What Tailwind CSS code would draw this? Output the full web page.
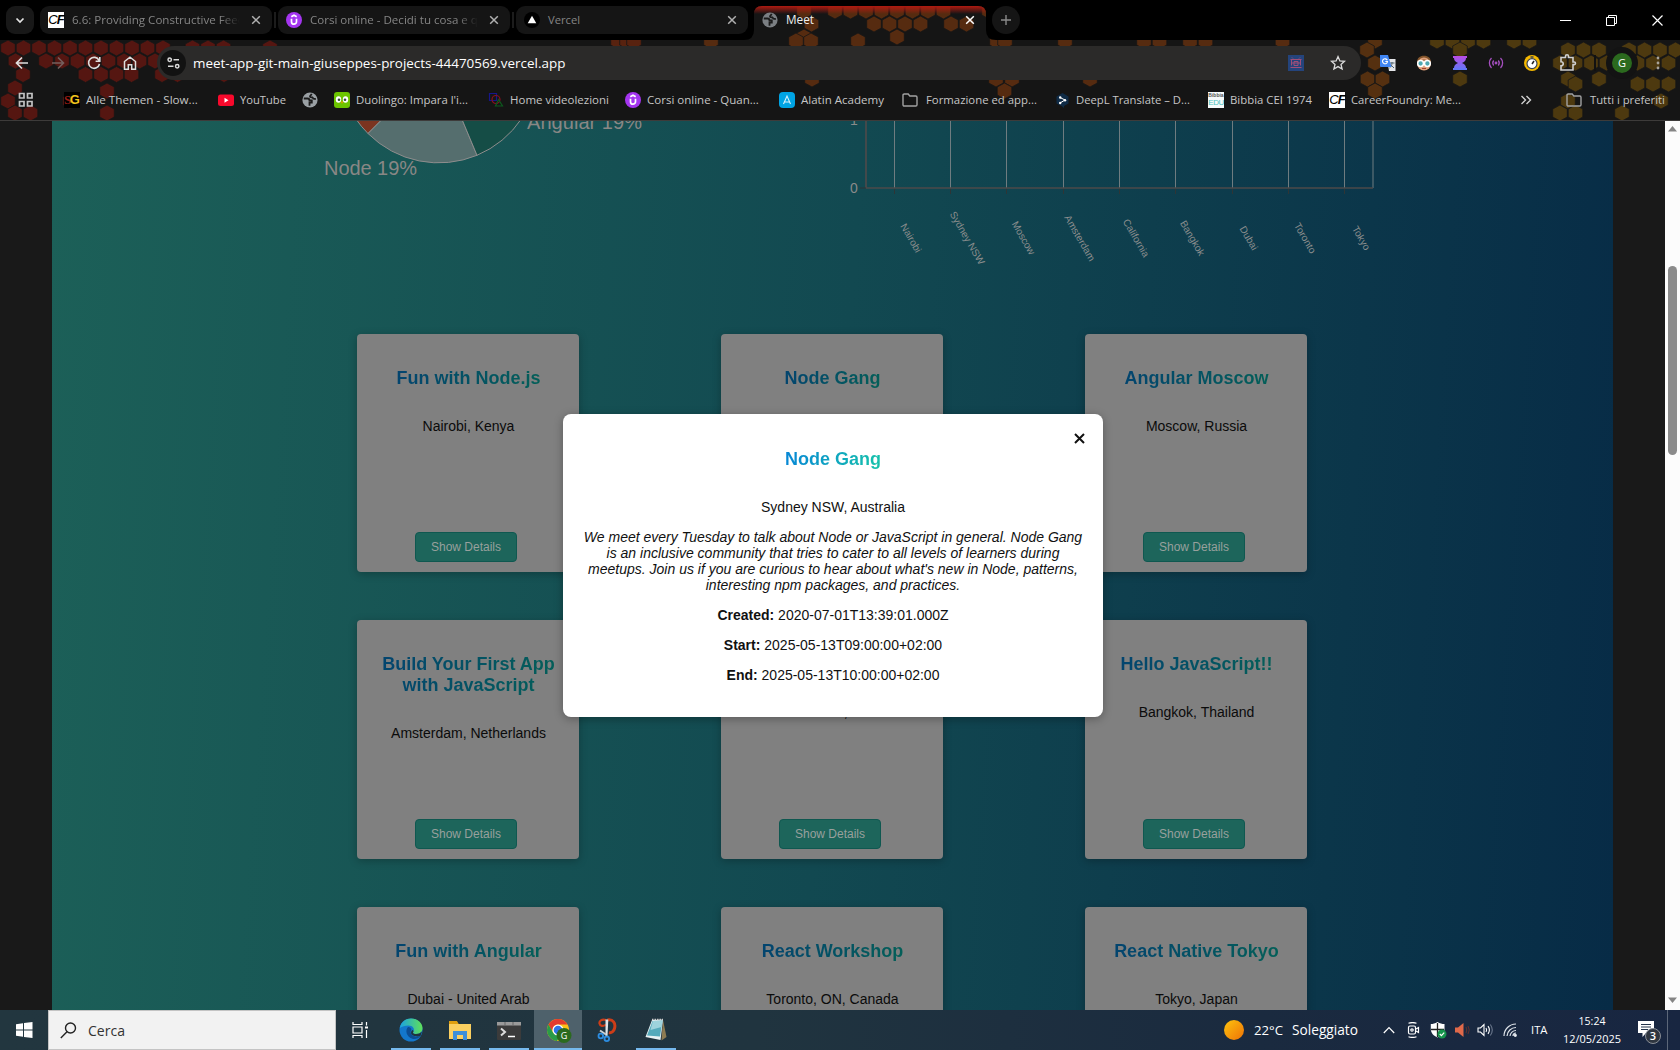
<!DOCTYPE html>
<html lang="it">
<head>
<meta charset="utf-8">
<title>Meet</title>
<script src="https://cdn.jsdelivr.net/npm/@tailwindcss/browser@4"></script>
</head>
<body class="w-[1680px] h-[1050px] overflow-hidden bg-black">
<svg width="0" height="0" class="absolute">
  <defs>
    <symbol id="x" viewBox="0 0 10 10"><path d="M1.2 1.2l7.6 7.6M8.8 1.2L1.2 8.8" fill="none" stroke="currentColor" stroke-width="1.5"/></symbol>
    <symbol id="globe" viewBox="0 0 16 16"><circle cx="8" cy="8" r="7.6" fill="currentColor"/><path d="M1.800 6.500h3.700c1.500 0 2 .8 2 2h2.300v2.200H7.500v3" stroke="#1b1b1b" stroke-width="1.800" fill="none"/><path d="M9.500 1.800c0 1.700-1.500 1.500-1.500 2.700 0 1 1.300.8 2.300.8.7 1.500 2 1.700 3.500 1.700" stroke="#1b1b1b" stroke-width="1.800" fill="none"/></symbol>
    <symbol id="folder" viewBox="0 0 16 14"><path d="M1 2.200C1 1.500 1.500 1 2.200 1h4l1.600 2h6c.700 0 1.200.500 1.200 1.200v7.600c0 .700-.500 1.200-1.200 1.200H2.200C1.500 13 1 12.500 1 11.800z" fill="none" stroke="#a2a2a2" stroke-width="1.400"/></symbol>
    <symbol id="udemy" viewBox="0 0 16 16"><circle cx="8" cy="8" r="8" fill="#a435f0"/><path d="M5.300 4.800L8 3.200l2.700 1.600M5.500 6.700v3a2.500 2.500 0 005 0v-3" fill="none" stroke="#fff" stroke-width="1.700"/></symbol>
  </defs>
</svg>

<div class="flex flex-col w-[1680px] h-[1050px] relative font-['Open_Sans','Noto_Sans',sans-serif]">

<!-- browser chrome -->
<header class="relative h-[121px] shrink-0 bg-[#151515] border-b border-[#3d3b3a]">
  <svg id="hexes" width="1680" height="120" class="absolute left-0 top-0"></svg>

  <!-- tab strip -->
  <div class="relative h-10 flex items-start pt-[6px] pl-[6px]">
    <svg width="1680" height="40" class="absolute left-0 top-0">
      <defs><linearGradient id="tabglow" x1="0" y1="0" x2="0" y2="1"><stop offset="0" stop-color="#b01a10"/><stop offset="1" stop-color="#b01a10" stop-opacity="0"/></linearGradient></defs>
      <path fill="#000" fill-rule="evenodd" d="M0 0H1680V40H996q-10 0-10-10V14q0-8-8-8H762q-8 0-8 8V30q0 10-10 10H0z"/>
      <path d="M754 14q0-8 8-8H978q8 0 8 8z" fill="url(#tabglow)"/>
    </svg>
    <div class="relative w-[28px] h-[28px] rounded-[9px] bg-[#181818] flex items-center justify-center"><svg width="10" height="7" viewBox="0 0 10 7"><path d="M1.500 1.500L5 5l3.500-3.500" fill="none" stroke="#e6e6e6" stroke-width="1.700"/></svg></div>
    <div class="relative ml-[6px] w-[232px] h-[28px] rounded-[9px] bg-[#151515] flex items-center pl-2 text-xs text-[#858585]">
      <div class="w-4 h-4 bg-white text-black text-[13px] leading-4 font-bold italic text-center font-['Liberation_Sans',sans-serif] tracking-[-1px]"><span class="font-normal">C</span>F</div>
      <div class="ml-2 w-[168px] overflow-hidden whitespace-nowrap [mask-image:linear-gradient(90deg,#000_88%,transparent)]"><span data-w="173">6.6: Providing Constructive Feed</span></div>
      <svg class="ml-[11px] text-[#b0b0b0]" width="10" height="10"><use href="#x"/></svg>
    </div>
    <div class="relative ml-[2px] mt-[6px] w-[2px] h-4 bg-[#1c1c1c]"></div>
    <div class="relative ml-[2px] w-[232px] h-[28px] rounded-[9px] bg-[#151515] flex items-center pl-2 text-xs text-[#858585]">
      <svg width="16" height="16"><use href="#udemy"/></svg>
      <div class="ml-2 w-[168px] overflow-hidden whitespace-nowrap [mask-image:linear-gradient(90deg,#000_88%,transparent)]"><span data-w="168">Corsi online - Decidi tu cosa e q</span></div>
      <svg class="ml-[11px] text-[#b0b0b0]" width="10" height="10"><use href="#x"/></svg>
    </div>
    <div class="relative ml-[2px] mt-[6px] w-[2px] h-4 bg-[#1c1c1c]"></div>
    <div class="relative ml-[2px] w-[232px] h-[28px] rounded-[9px] bg-[#151515] flex items-center pl-2 text-xs text-[#858585]">
      <svg width="16" height="16"><circle cx="8" cy="8" r="8" fill="#000"/><path d="M8 3.700l4.300 7.600H3.700z" fill="#fff"/></svg>
      <div class="ml-2 w-[168px] whitespace-nowrap"><span data-w="32">Vercel</span></div>
      <svg class="ml-[11px] text-[#b0b0b0]" width="10" height="10"><use href="#x"/></svg>
    </div>
    <div class="relative ml-[6px] w-[232px] h-[28px] flex items-center pl-2 text-xs text-[#eee]">
      <svg class="text-[#7b7f83]" width="16" height="16"><use href="#globe"/></svg>
      <div class="ml-2 w-[168px] whitespace-nowrap"><span data-w="28">Meet</span></div>
      <svg class="ml-[11px] text-white" width="10" height="10"><use href="#x"/></svg>
    </div>
    <div class="relative ml-[6px] w-[28px] h-[28px] rounded-full bg-[#151515] flex items-center justify-center"><svg width="12" height="12"><path d="M6 1v10M1 6h10" stroke="#8a8a8a" stroke-width="1.400"/></svg></div>
    <div class="relative ml-auto mr-[17px] h-[28px] flex items-center gap-[35px]">
      <svg width="11" height="11"><path d="M0 5.500h11" stroke="#fff"/></svg>
      <svg width="11" height="11"><path d="M.5 2.500h8v8h-8zM2.500 2.500v-2h8v8h-2" fill="none" stroke="#fff"/></svg>
      <svg width="11" height="11"><path d="M.5.5l10 10M10.500.5l-10 10" stroke="#fff" stroke-width="1.200"/></svg>
    </div>
  </div>

  <!-- toolbar -->
  <div class="relative h-[46px] flex items-center pl-1">
    <div class="w-9 flex justify-center"><svg width="14" height="14"><path d="M13 7H2M7 1.500L1.500 7 7 12.500" fill="none" stroke="#dedede" stroke-width="1.700"/></svg></div>
    <div class="w-9 flex justify-center"><svg width="14" height="14"><path d="M1 7h11M7 1.500L12.500 7 7 12.500" fill="none" stroke="#75605e" stroke-width="1.600"/></svg></div>
    <div class="w-9 flex justify-center"><svg width="14" height="14"><path d="M12 4.300A5.500 5.500 0 1012.500 8M12.800 1v4.200H8.600" fill="none" stroke="#dedede" stroke-width="1.600"/></svg></div>
    <div class="w-9 flex justify-center"><svg width="14" height="14"><path d="M1.500 5.500L7 1.200l5.500 4.300v7.700H8.700V8.800H5.300v4.400H1.500z" fill="none" stroke="#dedede" stroke-width="1.500"/></svg></div>
    <div class="ml-[9px] w-[1204px] h-[34px] rounded-full bg-[#2b2a29] flex items-center pl-[3px]">
      <div class="w-[26px] h-[26px] rounded-full bg-[#121212] flex items-center justify-center"><svg width="13" height="12" fill="none" stroke="#dadada" stroke-width="1.500"><circle cx="2.700" cy="2.800" r="1.700"/><path d="M6.500 2.800H12M1 9.200h5.500"/><circle cx="10.200" cy="9.200" r="1.700"/></svg></div>
      <div class="ml-[7px] text-sm text-white whitespace-nowrap"><span data-w="373">meet-app-git-main-giuseppes-projects-44470569.vercel.app</span></div>
      <svg class="ml-auto" width="16" height="16"><path fill="#24447c" d="M0 0h16v16H0z"/><path d="M2.500 4.500h11M3.500 4.500v6M12.500 4.500v6M2.500 12.500h11M3.500 8h9M6 6.500h4v4H6zM4 2.500l1 1M12 2.500l-1 1" stroke="#a04f78" fill="none"/></svg>
      <svg class="ml-[26px] mr-[15px]" width="16" height="16"><path d="M8 1.600l1.900 4.300 4.600.4-3.500 3.100 1.100 4.600L8 11.600 3.900 14 5 9.400 1.500 6.300l4.600-.4z" fill="none" stroke="#dcdcdc" stroke-width="1.300"/></svg>
    </div>
    <div class="ml-[9px] w-9 flex justify-center"><svg width="16" height="16"><path d="M7 4h8.500v12H9z" fill="#e4e6ea"/><path d="M9.500 8h5M12 7v1c0 2-1 4-2.500 5M10.500 9.500l3.500 3.500" stroke="#53656d" fill="none"/><path d="M0 0h8l3.500 12H1a1 1 0 01-1-1z" fill="#4086f4"/><path d="M7.300 5.300A2.500 2.500 0 107.500 6.500H5.300" stroke="#fff" fill="none" stroke-width="1.100"/></svg></div>
    <div class="w-9 flex justify-center"><svg width="16" height="16"><circle cx="8" cy="8.500" r="7" fill="#dfa07a"/><path d="M1 7C1.500 2 5 .8 8 .8S14.500 2 15 7c-3-2-11-2-14 0z" fill="#80542b"/><path d="M4 5q4-3 8 0" stroke="#dfa07a" stroke-width="2" fill="none"/><circle cx="4.600" cy="8.500" r="2.900" fill="#4fa8b2" stroke="#fff" stroke-width="1.500"/><circle cx="11.400" cy="8.500" r="2.900" fill="#4fa8b2" stroke="#fff" stroke-width="1.500"/><path d="M6 13.500h4" stroke="#a04030"/></svg></div>
    <div class="w-9 flex justify-center"><svg width="16" height="16"><defs><linearGradient id="hg" x1="0" y1="0" x2="0" y2="1"><stop offset="0" stop-color="#bb4ce4"/><stop offset="1" stop-color="#5f79f7"/></linearGradient></defs><path d="M1 1h14v2h-1c0 3-2 4-4 5 2 1 4 2 4 5h1v2H1v-2h1c0-3 2-4 4-5-2-1-4-2-4-5H1z" fill="url(#hg)"/></svg></div>
    <div class="w-9 flex justify-center"><svg width="16" height="14" fill="none" stroke="#a64fc0" stroke-width="1.300"><path d="M3.500 2a7 7 0 000 10M12.500 2a7 7 0 010 10M5.700 4.500a4 4 0 000 5M10.300 4.500a4 4 0 010 5"/><circle cx="8" cy="7" r=".8" fill="#a64fc0"/></svg></div>
    <div class="w-9 flex justify-center"><svg width="16" height="16"><circle cx="8" cy="8" r="8" fill="#f5b800"/><circle cx="8" cy="8.600" r="5" fill="#fff" stroke="#3b4350" stroke-width="1.200"/><path d="M8 9l2-3" stroke="#222" stroke-width="1.500"/><path d="M6.500 2h3" stroke="#3b4350" stroke-width="1.500"/></svg></div>
    <div class="w-9 flex justify-center"><svg width="18" height="18"><path d="M2 3.500h4.500V2.300a1.500 1.500 0 013 0v1.200H14v4.500h1.200a1.300 1.300 0 010 2.600H14V16H2v-4.300c3 0 3-4 0-4z" fill="none" stroke="#cfcfcf" stroke-width="1.600"/></svg></div>
    <div class="w-[18px] flex justify-center"><div class="w-[2px] h-4 bg-[#111]"></div></div>
    <div class="w-9 flex justify-center"><div class="w-[32px] h-[32px] rounded-full bg-[#131313] flex items-center justify-center"><div class="w-5 h-5 rounded-full bg-[#2b6a1e] text-white text-[11px] leading-5 text-center">G</div></div></div>
    <div class="w-9 flex justify-center"><svg width="4" height="16" fill="#a8a39a"><circle cx="2" cy="3" r="1.400"/><circle cx="2" cy="8" r="1.400"/><circle cx="2" cy="13" r="1.400"/></svg></div>
  </div>

  <!-- bookmarks -->
  <div class="relative h-[28px] flex items-center pl-[18px] text-xs text-[#c6c6c6] whitespace-nowrap">
    <div class="w-[46px] shrink-0"><svg width="16" height="16" fill="none" stroke="#c4c4c4" stroke-width="1.700"><path d="M1.500 1.500h4.500v4.500H1.500zM9.500 1.500H14v4.500H9.500zM1.500 9.500h4.500V14H1.500zM9.500 9.500H14V14H9.500z"/></svg></div>
    <div class="w-[154px] shrink-0 flex items-center gap-[6px]"><div class="w-4 h-4 bg-black text-[13px] leading-4 font-bold font-['Liberation_Serif',serif] tracking-[-1.500px]"><span class="text-[#9b1c14]">S</span><span class="text-[#f0c51c] font-['Liberation_Sans',sans-serif]">G</span></div><span data-w="112">Alle Themen - Slow...</span></div>
    <div class="w-[84px] shrink-0 flex items-center gap-[6px]"><svg width="16" height="16"><rect y="2.500" width="16" height="11.500" rx="2.500" fill="#f8092c"/><path d="M6.500 5.700v5l4-2.500z" fill="#fff"/></svg><span data-w="46">YouTube</span></div>
    <div class="w-[32px] shrink-0"><svg class="text-[#9aa0a4]" width="16" height="16"><use href="#globe"/></svg></div>
    <div class="w-[154px] shrink-0 flex items-center gap-[6px]"><svg width="16" height="16"><rect width="16" height="16" rx="3" fill="#6cc400"/><ellipse cx="4.500" cy="7.500" rx="2.700" ry="3.300" fill="#fff"/><ellipse cx="11.500" cy="7.500" rx="2.700" ry="3.300" fill="#fff"/><circle cx="5" cy="7.800" r="1.300" fill="#3c4a3c"/><circle cx="11" cy="7.800" r="1.300" fill="#3c4a3c"/><path d="M6.700 9.500h2.600L8 11.800z" fill="#f49000"/></svg><span data-w="112">Duolingo: Impara l'i...</span></div>
    <div class="w-[137px] shrink-0 flex items-center gap-[6px]"><svg width="16" height="16" fill="none" stroke-width="1.200"><path d="M1.500 1.500h7v7h-7z" stroke="#16168a"/><circle cx="8" cy="7.500" r="4" stroke="#8c1020"/><path d="M10.500 7.500l4 6.500H7.500z" stroke="#0d5a1e"/></svg><span data-w="99">Home videolezioni</span></div>
    <div class="w-[154px] shrink-0 flex items-center gap-[6px]"><svg width="16" height="16"><use href="#udemy"/></svg><span data-w="112">Corsi online - Quan...</span></div>
    <div class="w-[123px] shrink-0 flex items-center gap-[6px]"><svg width="16" height="16"><rect width="16" height="16" rx="4" fill="#00a4e4"/><path d="M4.500 12L8 4l3.500 8M5.500 10h5" fill="none" stroke="#d8f2fc" stroke-width="1.100"/></svg><span data-w="83">Alatin Academy</span></div>
    <div class="w-[154px] shrink-0 flex items-center gap-[8px]"><svg width="16" height="14"><use href="#folder"/></svg><span data-w="111">Formazione ed app...</span></div>
    <div class="w-[152px] shrink-0 flex items-center gap-[4px]"><svg width="16" height="16"><path d="M6.500 1l6 3.500v7L8 14v2l-2.500-2-5-2.500v-7z" fill="#0f2b46"/><path d="M4 5.500L9 8 4 11" fill="none" stroke="#fff"/><circle cx="4.200" cy="5.500" r="1.200" fill="#fff"/><circle cx="9" cy="8.200" r="1.200" fill="#fff"/><circle cx="4.200" cy="11" r="1.200" fill="#fff"/></svg><span data-w="114">DeepL Translate – D...</span></div>
    <div class="w-[121px] shrink-0 flex items-center gap-[6px]"><div class="w-4 h-4 bg-[#f7fbfb] flex flex-col items-center overflow-hidden font-['Liberation_Sans',sans-serif]"><span class="text-[5px] leading-[6px] font-bold text-[#555]">Bibbia</span><span class="text-[8px] leading-[9px] text-[#4fc3c0] tracking-[-.5px]">EDU</span></div><span data-w="82">Bibbia CEI 1974</span></div>
    <div class="w-[189px] shrink-0 flex items-center gap-[6px]"><div class="w-4 h-4 bg-white text-black text-[13px] leading-4 font-bold italic text-center font-['Liberation_Sans',sans-serif] tracking-[-1px]"><span class="font-normal">C</span>F</div><span data-w="110">CareerFoundry: Me...</span></div>
    <div class="w-[48px] shrink-0 pl-[2px]"><svg width="12" height="10"><path d="M1.500 1l4 4-4 4M6.500 1l4 4-4 4" fill="none" stroke="#d0d0d0" stroke-width="1.400"/></svg></div>
    <div class="flex items-center gap-[8px]"><svg width="16" height="14"><use href="#folder"/></svg><span data-w="75">Tutti i preferiti</span></div>
  </div>
</header>

<!-- page -->
<main class="relative h-[889px] shrink-0 flex overflow-hidden bg-[#191919] font-['Liberation_Sans',Arial,sans-serif]">
  <div class="ml-[52px] w-[1561px] h-full bg-[linear-gradient(94deg,#1c6058_0%,#124951_50%,#072b46_100%)] overflow-hidden">
    <svg class="block" width="1561" height="213" viewBox="52 121 1561 213" font-family="Liberation Sans, Arial, sans-serif">
      <g stroke="#8d8d8d" stroke-width="1">
        <path d="M438.500 63L368 133.500A100 100 0 01338.500 63z" fill="#7b3420"/>
        <path d="M438.500 63L477 155.300A100 100 0 01368 133.500z" fill="#556e6e"/>
        <path d="M438.500 63L538.500 63A100 100 0 01477 155.300z" fill="#154d46"/>
      </g>
      <g fill="#898785" font-size="20"><text x="324" y="175" textLength="93">Node 19%</text><text x="527" y="129" textLength="115">Angular 19%</text></g>
      <path d="M894.500 121v67M950.500 121v67M1006.500 121v67M1063.500 121v67M1119.500 121v67M1175.500 121v67M1232.500 121v67M1288.500 121v67M1344.500 121v67M1373 121v67" stroke="#6f7c80"/>
      <path d="M866 121v67.200M866 188h507" stroke="#4c4a4a" stroke-width="1.700" fill="none"/>
      <path d="M860 188h6M894.500 189v5M950.500 189v5M1006.500 189v5M1063.500 189v5M1119.500 189v5M1175.500 189v5M1232.500 189v5M1288.500 189v5M1344.500 189v5" stroke="#2e3536"/>
      <g fill="#8a8a8a" font-size="14"><text x="850" y="193">0</text><text x="850" y="125">1</text></g>
      <g id="ticks" fill="#8a8d8d" font-size="10" text-anchor="middle"></g>
    </svg>
    <div class="ml-[305px] w-[950px] grid grid-cols-[222px_222px_222px] gap-x-[142px] gap-y-12" id="cards"></div>
  </div>
  <div class="ml-[52px] w-[15px] h-full bg-[#fcfcfc] relative flex flex-col items-center">
    <svg class="mt-[5px]" width="9" height="6"><path d="M4.500 0L9 5.500H0z" fill="#858585"/></svg>
    <div class="mt-[134px] w-[9px] h-[189px] rounded-full bg-[#8b8b8b]"></div>
    <svg class="mt-auto mb-[7px]" width="9" height="6"><path d="M4.500 6L0 .5h9z" fill="#858585"/></svg>
  </div>

  <!-- event details dialog -->
  <div class="absolute left-[563px] top-[293px] w-[540px] h-[303px] rounded-lg bg-white text-[#111] text-sm leading-4 text-center pt-[35px] px-5 shadow-[0_2px_10px_rgba(0,0,0,0.3)]">
    <svg class="absolute right-[18px] top-[19px]" width="11" height="11"><path d="M1 1l9 9M10 1l-9 9" stroke="#111" stroke-width="2"/></svg>
    <h2 class="text-[18px] leading-[21px] font-bold"><span class="inline-block align-top text-transparent bg-clip-text bg-[linear-gradient(100deg,#0786d6,#17c3aa)]">Node Gang</span></h2>
    <p class="mt-[29px]">Sydney NSW, Australia</p>
    <p class="mt-[14px] italic">We meet every Tuesday to talk about Node or JavaScript in general. Node Gang<br>is an inclusive community that tries to cater to all levels of learners during<br>meetups. Join us if you are curious to hear about what's new in Node, patterns,<br>interesting npm packages, and practices.</p>
    <p class="mt-[14px]"><b>Created:</b> 2020-07-01T13:39:01.000Z</p>
    <p class="mt-[14px]"><b>Start:</b> 2025-05-13T09:00:00+02:00</p>
    <p class="mt-[14px]"><b>End:</b> 2025-05-13T10:00:00+02:00</p>
  </div>
</main>

<!-- taskbar -->
<footer class="h-10 shrink-0 flex items-stretch bg-[linear-gradient(90deg,#22363f_0%,#20343f_45%,#1a2a3f_75%,#182641_100%)] text-white">
  <div class="w-12 flex items-center pl-4"><svg width="17" height="16" fill="#fff"><path d="M0 2.300L7 1.300v6.300H0zM8 1.100L16.500 0v7.600H8zM0 8.500h7v6.300L0 13.800zM8 8.500h8.500V16L8 14.900z"/></svg></div>
  <div class="w-[288px] bg-[#f2f2f2] border border-[#c4c4c4] flex items-center pl-[11px] text-[#333] text-[15px]"><svg width="17" height="17"><circle cx="10.500" cy="6" r="5" fill="none" stroke="#222" stroke-width="1.400"/><path d="M7 9.800L.8 16" stroke="#222" stroke-width="1.400"/></svg><span class="ml-[11px]"><span data-w="37">Cerca</span></span></div>
  <div class="w-[49px] flex items-center justify-center"><svg width="17" height="16" fill="none" stroke="#fff" stroke-width="1.200"><path d="M1 0v2.500h9V0M1 16v-2.500h9V16M1 5h9v6H1zM14.500 0v3.500M14.500 8v8"/><path d="M13 4.500h3v2h-3z" fill="#fff" stroke="none"/></svg></div>
  <div class="ml-[6px] w-10 flex flex-col justify-end items-center border-b-2 border-[#76b9ed]"><svg class="mb-[6px]" width="24" height="24"><defs><linearGradient id="e1" x1="0" y1="0" x2="1" y2="0"><stop offset="0" stop-color="#1ba2e0"/><stop offset="1" stop-color="#5fe05a"/></linearGradient></defs><circle cx="12" cy="12" r="11.500" fill="#1377cc"/><path d="M.8 10C2 3.500 7 .5 12 .5c7 0 11.500 5 11.500 9.500 0 4-3 6-6.500 6-3 0-3.500-1-2.500-2.500 1.500-3-1-6-5-6C6 7.500 3 8.500.8 10z" fill="url(#e1)"/><path d="M9 9c-3 3-2 10 5 12 3 .500 6-1 7.500-3-3 1.500-8 1-9.500-2.500-1-2 .500-4 .5-4S12 9 9 9z" fill="#0c4d93"/><path d="M14.500 13.500c-1 1.500-.5 2.500 2.500 2.500 2 0 4.500-.8 6-2.500L21.500 18c-4 1-9 0-9.500-3 0-2 1-3 2-3z" fill="#20343f"/></svg></div>
  <div class="ml-[9px] w-10 flex flex-col justify-end items-center border-b-2 border-[#76b9ed]"><svg class="mb-[8px]" width="22" height="19"><path d="M0 1h8l1.500 2H22v15H0z" fill="#fbd060"/><path d="M0 0h8l1.500 3H0z" fill="#e0a010"/><path d="M4 10h14v9h-4v-5H8v5H4z" fill="#3d8fd8"/></svg></div>
  <div class="ml-[9px] w-10 flex flex-col justify-end items-center border-b-2 border-[#76b9ed]"><svg class="mb-[8px]" width="24" height="18"><rect width="24" height="18" rx="1" fill="#3b3b3b"/><path d="M0 0h24v3.500H0z" fill="#9a9a9a"/><path d="M8 0v3.500M16 0v3.500" stroke="#666"/><path d="M4 6.500l4 3.500-4 3.500" fill="none" stroke="#ddd" stroke-width="2"/><path d="M11 14.500h7" stroke="#fff" stroke-width="1.500"/></svg></div>
  <div class="ml-[5px] w-12 flex flex-col justify-end items-center bg-[#4e616b] border-b-2 border-[#76b9ed]"><svg class="mb-[5px] ml-[2px]" width="26" height="25"><circle cx="12" cy="12" r="11" fill="#fbc116"/><path d="M2.500 6.500A11 11 0 0121.500 6.500H12a5.500 5.500 0 00-5 3.500L6 13z" fill="#e33b2e"/><path d="M2.500 6.500A11 11 0 0011 23l4.500-7.500A5.500 5.500 0 017 14.500z" fill="#2a9b47"/><circle cx="12" cy="12" r="5.500" fill="#fff"/><circle cx="12" cy="12" r="4.300" fill="#2f74e6"/><circle cx="18" cy="17.500" r="7.500" fill="#2b6a1e"/><text x="18" y="21" font-size="9" fill="#fff" text-anchor="middle">G</text></svg></div>
  <div class="ml-[1px] w-12 flex items-center justify-center"><svg width="20" height="24"><path d="M10.500 2C16 1 19 5 17.500 10.500c-.8 3-3 4.700-5.500 4" fill="none" stroke="#cc3d18" stroke-width="3"/><path d="M9 2C4.500 .8 2 3 2.500 5.500S6 9 9 6.500" fill="none" stroke="#cc3d18" stroke-width="2.200"/><path d="M8.500 1.500h2.800L10.500 18H8.500z" fill="#dfe6ea"/><path d="M3 12.500l6 4" stroke="#c8d0d4" stroke-width="2"/><circle cx="3.800" cy="18" r="2.300" fill="none" stroke="#2c8de0" stroke-width="1.800"/><circle cx="9.800" cy="20.800" r="2.300" fill="none" stroke="#2c8de0" stroke-width="1.800"/></svg></div>
  <div class="ml-[5px] w-10 flex flex-col justify-end items-center border-b-2 border-[#76b9ed]"><svg class="mb-[6px]" width="24" height="24"><path d="M19 2l3.500 17-5 3.500z" fill="#8d7b52"/><path d="M8 2l11-.5L16.500 22 1.500 19z" fill="#e9f2f4"/><path d="M8.500 3l10-.5L16 18.500l-13-1z" fill="#55aabb"/><path d="M8.800 3h9.700l-1 6L6.500 12z" fill="#9ed3dc"/><path d="M8 1.500h11" stroke="#ccc" stroke-width="1.500" stroke-dasharray="1.500 1"/></svg></div>

  <div class="ml-auto w-[456px] flex items-center">
    <svg class="shrink-0" width="20" height="20"><defs><linearGradient id="sun" x1="0" y1="0" x2="1" y2="1"><stop offset="0" stop-color="#fdc30e"/><stop offset="1" stop-color="#ee7206"/></linearGradient></defs><circle cx="10" cy="10" r="10" fill="url(#sun)"/></svg>
    <span class="ml-[10px] w-[38px] shrink-0 text-sm whitespace-nowrap"><span data-w="29">22°C</span></span>
    <span class="w-[91px] shrink-0 text-sm whitespace-nowrap"><span data-w="66">Soleggiato</span></span>
    <svg class="shrink-0" width="12" height="8"><path d="M.8 7L6 1.500 11.200 7" fill="none" stroke="#fff" stroke-width="1.200"/></svg>
    <svg class="ml-[12px] shrink-0" width="13" height="16" fill="none" stroke="#fff" stroke-width="1.200"><rect x="1.500" y="4" width="7" height="8" rx="1.500"/><circle cx="5" cy="8" r="1.200"/><path d="M9 7l2.500-1.500v5L9 9M1.500 1.300q4-1.500 8 0M1.500 14.700q4 1.500 8 0"/></svg>
    <svg class="ml-[10px] shrink-0" width="17" height="17"><path d="M7.500 0C5 1.500 3 2 .8 2v5c0 4 3 7 6.700 8.500C11 14 14.500 11 14.500 7V2C12 2 10 1.500 7.500 0z" fill="#fff"/><path d="M7.500 1v14M1 7.500h13" stroke="#222" stroke-width="1.300"/><circle cx="12" cy="12" r="4.500" fill="#15944c"/><path d="M9.800 12l1.600 1.600 2.800-3" stroke="#fff" fill="none" stroke-width="1.200"/></svg>
    <svg class="ml-[7px] shrink-0" width="17" height="16"><path d="M1 5.500h3L9.500 1v14L4 10.500H1z" fill="#e0694a"/><path d="M12 5q1.500 3 0 6M14 4q2.500 4 0 8" stroke="#60302e" fill="none"/></svg>
    <svg class="ml-[6px] shrink-0" width="17" height="14" fill="none" stroke="#fff" stroke-width="1.100"><path d="M1 5h2.500L7 1.500v11L3.500 9H1zM9 5q1.300 2 0 4M11 3.200q2.800 3.800 0 7.600"/><path d="M13.300 1.500q4 5.500 0 11" stroke="#68758a"/></svg>
    <svg class="ml-[9px] shrink-0" width="15" height="14" fill="none" stroke="#dfe4ea" stroke-width="1.200"><path d="M1 13A12 12 0 0113 1M4 13a9 9 0 019-8.500M7 13a6 6 0 016-5.500"/><path d="M10 13a3 3 0 013-3"/><circle cx="12.300" cy="12.300" r="1" fill="#fff"/></svg>
    <span class="ml-[13px] w-[36px] shrink-0 text-xs whitespace-nowrap"><span data-w="16.500">ITA</span></span>
    <div class="w-[58px] -ml-1 shrink-0 text-xs leading-[17.500px] flex flex-col items-center whitespace-nowrap"><span data-w="27">15:24</span><span data-w="58">12/05/2025</span></div>
    <div class="relative ml-[16px] shrink-0 w-[28px] h-[30px]"><svg class="absolute left-0 top-[6px]" width="18" height="17"><path d="M1 0h16v12H9l-3.500 4v-4H1z" fill="#fff"/><path d="M4 3.500h10M4 6h10M4 8.500h7" stroke="#22324a"/></svg><span class="absolute left-[8px] top-[13px] w-4 h-4 rounded-full bg-[#2f3640] border border-[#8a8f98] text-[11px] leading-[14px] text-center font-semibold">3</span></div>
    <div class="ml-[2px] w-px h-10 bg-[#5c6779]"></div>
  </div>
</footer>
</div>

<script>
// honeycomb theme: [row centre y, [column centre x, ...]]
const combs = [
  [11,[804,835,850.500,866,881.500,897,912.500,928,943.500,989]],
  [24,[811.500,874,889.500,905,920.500,951,966.500]],
  [37,[804,897]],
  [41,[618,627,634,711,796,811,858,997,1005,1065,1144,1159.500,1190,1205.500,1282.500,1375,1437,1452.500,1468,1483.500,1514,1529.500]],
  [48,[8,23.5,39,54.500,70,85.500,101,116.500,132,147.500,163,192.500,208,223.500,270]],
  [50,[1367,1460,1568,1583.500,1599,1629,1644.500,1660,1675.500]],
  [61,[15.500,46,62,77.500,93,108.500,124,139.500,155]],
  [63,[1375,1560,1575.500,1591,1606.500,1622,1637.500,1653,1668.500]],
  [74.500,[23,85.500,101,116.500,131.500,162,177.500,224]],
  [79,[812,996,1012,1090,1367.500,1382.500,1460,1568,1599]],
  [84,[1637.500,1653,1668.500,1575.500]],
  [88,[15]],
  [91,[107,1004.500,1375]],
  [101,[8,70,1568,1661]],
  [113,[15,30.500,107,1560,1575.500,1622]]
];
const hexes = document.getElementById('hexes');
const fillAt = x => x < 300 ? '#551611' : x < 700 ? '#58220f' : x < 1300 ? '#562b10' : x < 1420 ? '#553010' : '#4d390f';
hexes.innerHTML = combs.map(([y, xs]) => xs.map(x =>
  `<path d="M${x} ${y-8}l7.300 4v8l-7.300 4-7.300-4v-8z" fill="${fillAt(x)}" stroke="#161616" stroke-width=".8"/>`).join('')).join('');

document.getElementById('ticks').innerHTML = ['Nairobi','Sydney NSW','Moscow','Amsterdam','California','Bangkok','Dubai','Toronto','Tokyo']
  .map((t, i) => `<text transform="translate(${911 + i * 56.3} 238) rotate(60)" dy="3.500">${t}</text>`).join('');

// [title, place, parts not painted while the dialog covers them]
const events = [['Fun with Node.js','Nairobi, Kenya'],['Node Gang','Sydney NSW, Australia','pb'],['Angular Moscow','Moscow, Russia'],
  ['Build Your First App with JavaScript','Amsterdam, Netherlands'],['Learn JavaScript','California, USA','t'],['Hello JavaScript!!','Bangkok, Thailand'],
  ['Fun with Angular','Dubai - United Arab'],['React Workshop','Toronto, ON, Canada'],['React Native Tokyo','Tokyo, Japan']];
document.getElementById('cards').innerHTML = events.map(([title, place, off = '']) => `
  <article class="relative h-[238.400px] rounded-[4px] bg-[#808080] shadow-[0_2px_8px_rgba(0,0,0,0.25)] flex flex-col items-center pt-[34px] pl-[23px] pr-[22px] pb-[10px] text-center text-sm leading-4 text-[#0b0b0b]">
    <h2 class="text-[18px] leading-[21px] font-bold text-transparent bg-clip-text bg-[linear-gradient(100deg,#03446f,#045f58)] ${off.includes('t') ? 'invisible' : ''}">${title}</h2>
    <p class="mt-[29px] ${off.includes('p') ? 'invisible' : ''}">${place}</p>
    <button class="mt-auto mr-[5px] w-[102px] h-[30px] shrink-0 rounded-[4px] bg-[#1d655b] border border-[#0f5850] text-xs text-[#98a09d] ${off.includes('b') ? 'invisible' : ''}">Show Details</button>
  </article>`).join('');

// size each label so that it takes its design width
const ctx = document.createElement('canvas').getContext('2d');
ctx.font = '100px "Open Sans"';
document.querySelectorAll('[data-w]').forEach(el => {
  el.style.fontSize = (100 * el.dataset.w / ctx.measureText(el.textContent).width) + 'px';
});
</script>
</body>
</html>
